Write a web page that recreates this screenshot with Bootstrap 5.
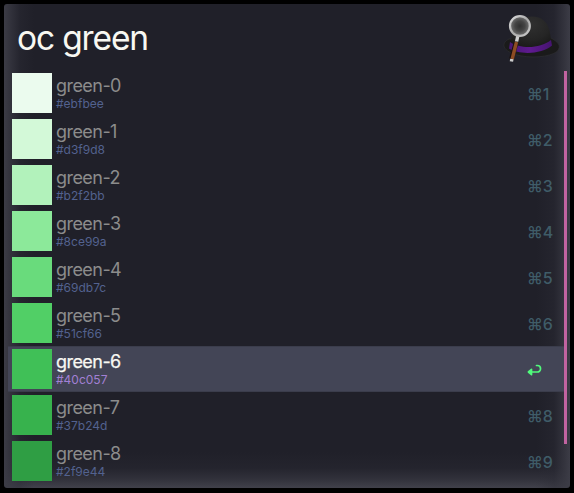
<!DOCTYPE html>
<html lang="en">
<head>
<meta charset="utf-8">
<meta name="viewport" content="width=device-width, initial-scale=1">
<title>oc green</title>
<link href="https://cdn.jsdelivr.net/npm/bootstrap@5.3.0/dist/css/bootstrap.min.css" rel="stylesheet">
<style>
body{background:#000;font-family:Inter,"Liberation Sans",sans-serif;overflow:hidden}
.launcher{width:566px;height:484px;margin:4px;padding:0 3px 4px 4px;border-radius:3px;
  background:
   linear-gradient(to right,#3c3c46 0,rgba(56,56,66,.72) 7px,rgba(44,44,54,.4) 16px,rgba(32,32,41,0) 30px),
   linear-gradient(to left,#3c3c46 0,rgba(56,56,66,.72) 7px,rgba(44,44,54,.4) 16px,rgba(32,32,41,0) 34px),
   linear-gradient(to top,#41414b 0,rgba(56,56,66,.7) 9px,rgba(44,44,54,.35) 20px,rgba(32,32,41,0) 36px),
   #202029}
.query{height:66px;padding:0 3px 0 9px}
.query-text{font-size:33.5px;line-height:69px;letter-spacing:-1.15px;color:#f8f8f2}
.results{width:556px}
.result{height:46px;padding:0 0 0 4px}
.result.chosen{background:#434556;box-shadow:inset 0 1px #3b3d4c,inset 0 -1px #3b3d4c}
.swatch{width:40px;height:40.5px;margin-right:4px}
.name{font-size:18px;line-height:22px;letter-spacing:-.55px;color:#8c8c8c}
.hex{font-size:12px;line-height:14px;letter-spacing:0;color:#53628f}
.key{width:37px;padding-top:2px;font-size:16px;font-weight:500;line-height:20px;letter-spacing:-.2px;color:#3f5c68}
.chosen .name{color:#f8f8f2;-webkit-text-stroke:.25px #f8f8f2}
.chosen .hex{color:#a280d4}
.thumb{width:3px;height:373px;margin-top:.5px;background:#c163a0}
</style>
<script src="https://cdn.jsdelivr.net/npm/bootstrap@5.3.0/dist/js/bootstrap.bundle.min.js"></script>
</head>
<body>
<main class="launcher">
  <header class="query d-flex justify-content-between">
    <div class="query-text">oc green</div>
    <svg class="flex-shrink-0" width="64" height="66" viewBox="500 4 64 66" aria-hidden="true">
      <defs>
        <radialGradient id="felt" cx=".5" cy=".25" r=".75"><stop offset="0" stop-color="#303030"/><stop offset=".6" stop-color="#252525"/><stop offset="1" stop-color="#181818"/></radialGradient>
        <radialGradient id="glass"><stop offset="0" stop-color="#303030"/><stop offset=".5" stop-color="#444"/><stop offset="1" stop-color="#757575"/></radialGradient>
        <linearGradient id="ribbon"><stop offset="0" stop-color="#481873"/><stop offset=".5" stop-color="#5f1a90"/><stop offset="1" stop-color="#45146f"/></linearGradient>
        <linearGradient id="rim" x2="1" y2="1"><stop offset="0" stop-color="#ddd"/><stop offset=".5" stop-color="#aaa"/><stop offset="1" stop-color="#ccc"/></linearGradient>
      </defs>
      <path d="M509 39C501 43 502 50 515 54.500C530 59 550 57 557 51.500C562 46 558 42 551 38Z" fill="#1a1a1a" stroke="#303034" stroke-width=".6"/>
      <path d="M510 44C513 35 514 16.500 532 16.500C549 17 550 31 551.500 42C549 50 516 53 510 44Z" fill="url(#felt)"/>
      <path d="M510 42C520 49 540 49 551 40L552 45.500C542 54.500 519 55 509 48.500Z" fill="url(#ribbon)"/>
      <path d="M516 43L511.500 59" stroke="#1b1110" stroke-width="4.800"/>
      <path d="M516.500 42L512.200 59" stroke="#8d4c23" stroke-width="3.400"/>
      <path d="M517.800 36L516.600 41.500M511.900 59L511.400 61.500" stroke="#ccc" stroke-width="3.400"/>
      <circle cx="519.900" cy="26" r="9.900" fill="url(#glass)" stroke="url(#rim)" stroke-width="2.200"/>
    </svg>
  </header>
  <div class="d-flex">
    <div class="results d-flex flex-column flex-shrink-0" id="results"></div>
    <div class="thumb flex-shrink-0"></div>
  </div>
</main>
<script>
const colors=['#ebfbee','#d3f9d8','#b2f2bb','#8ce99a','#69db7c','#51cf66','#40c057','#37b24d','#2f9e44'];
const enter='<svg class="d-block" width="16" height="20" viewBox="0 0 16 20"><path d="M9.500 5.500H10.300A3 3 0 0 1 10.300 12H2M4.500 9.300L1.400 12L4.500 14.700Z" fill="none" stroke="#50fa7b" stroke-width="1.700" stroke-linejoin="round" stroke-linecap="round"/></svg>';
document.getElementById('results').innerHTML=colors.map((c,i)=>`
<div class="result d-flex align-items-center ${i===6?'chosen':''}">
  <div class="swatch flex-shrink-0" style="background:${c}"></div>
  <div class="flex-grow-1"><div class="name">green-${i}</div><div class="hex">${c}</div></div>
  <div class="key">${i===6?enter:'⌘'+(i+1)}</div>
</div>`).join('');
</script>
</body>
</html>
